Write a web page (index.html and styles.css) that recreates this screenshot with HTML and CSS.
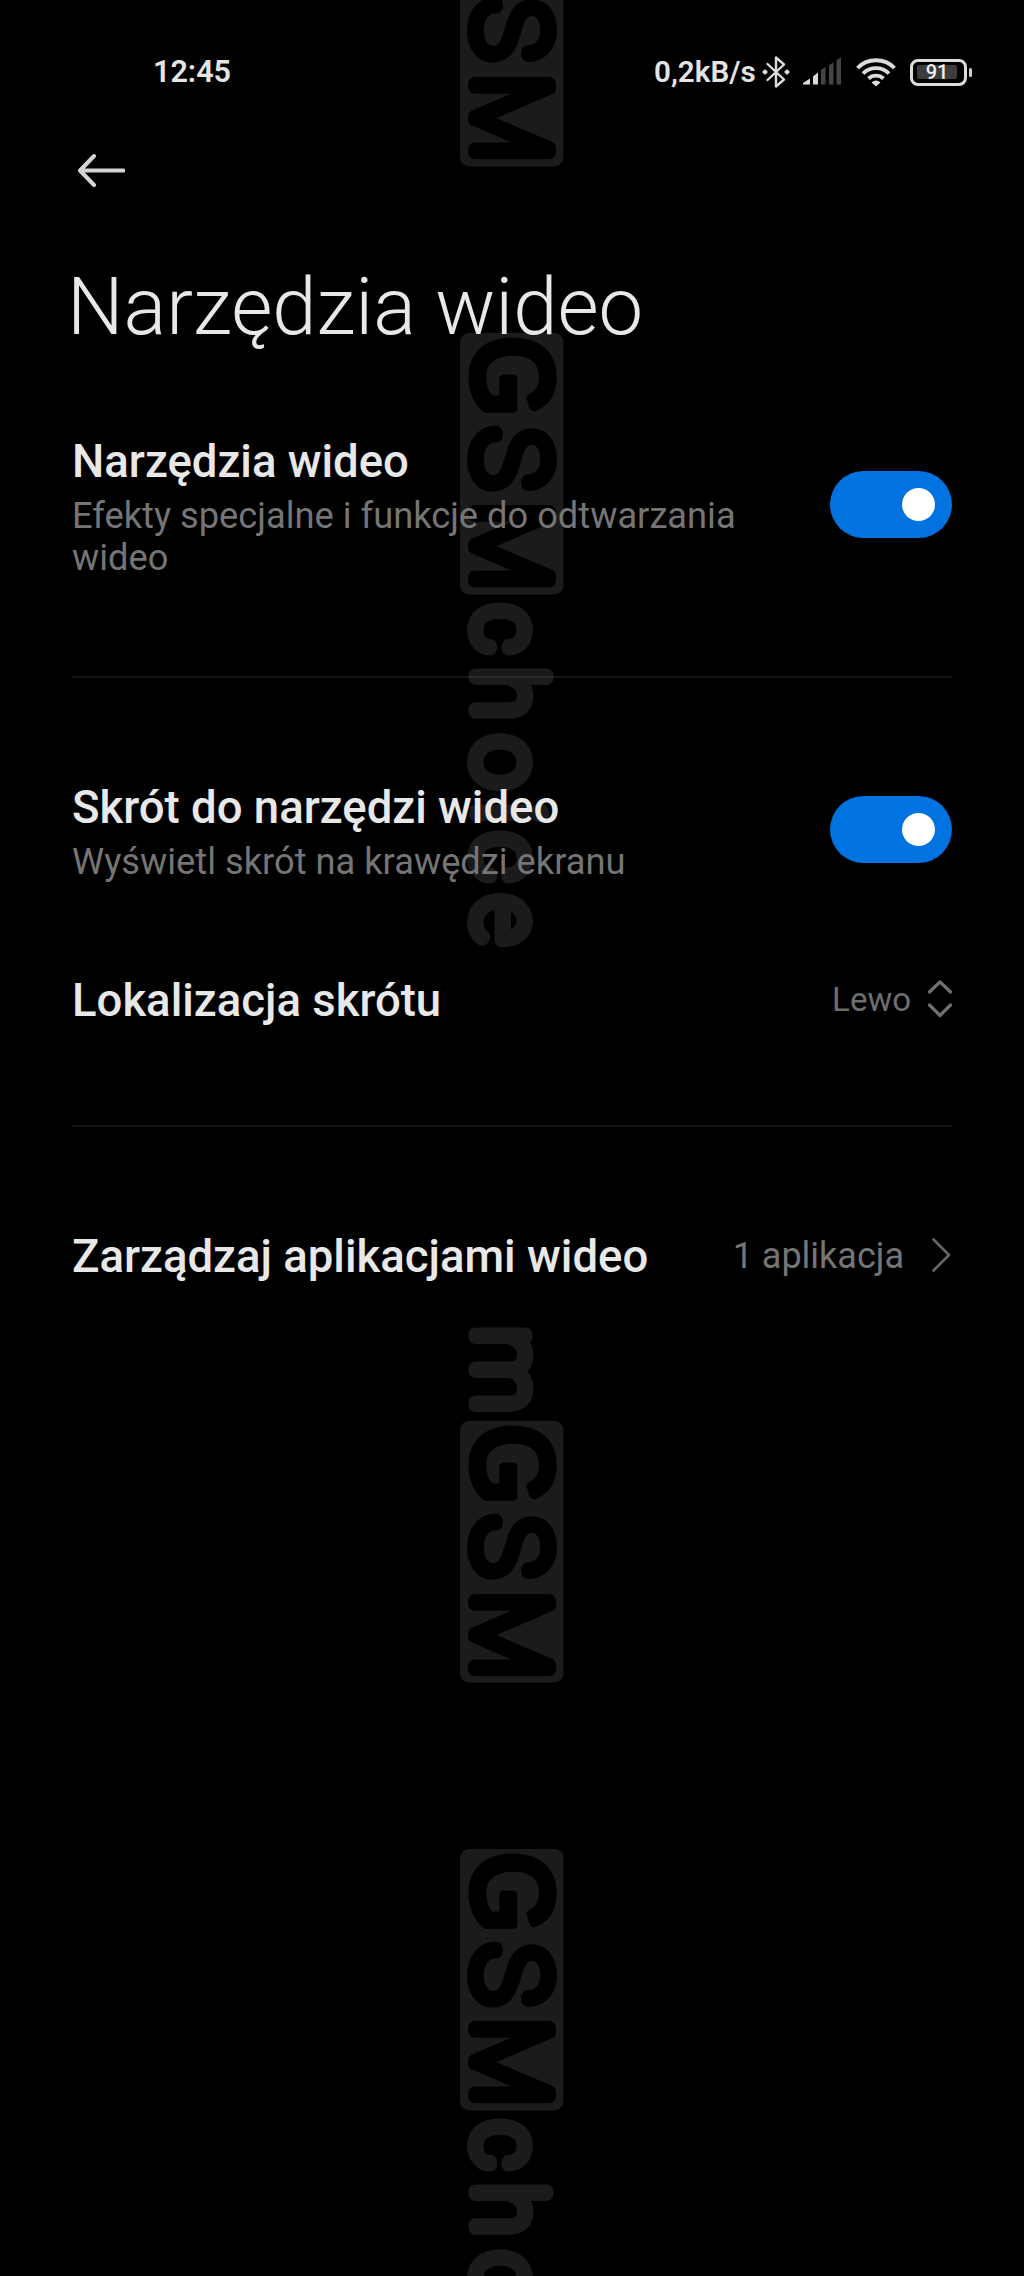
FILE: index.html
```html
<!DOCTYPE html>
<html lang="pl">
<head>
<meta charset="utf-8">
<title>Narzędzia wideo</title>
<link rel="stylesheet" href="styles.css">
</head>
<body>
<div class="screen">
  <svg class="watermark" width="1024" height="2276" viewBox="0 0 1024 2276" aria-hidden="true">
    <g transform="translate(475.5 0) rotate(90)">
      <rect class="tag" x="-95" y="-88" width="261.5" height="103.5" rx="9"/>
      <text class="caps" y="1" x="-1 74">SM</text>

      <rect class="tag" x="333" y="-88" width="261.5" height="103.5" rx="9"/>
      <text class="caps g" transform="translate(336.500 1.500) scale(.95 1.030)">G</text>
      <text class="caps" y="1" x="428 502">SM</text>
      <text class="lower" y="1" x="605 667.500 736 802 833 896">cho<tspan class="dotted">i</tspan>ce</text>

      <text class="lower" y="1" x="1327">m</text>
      <rect class="tag" x="1421" y="-88" width="261.5" height="103.5" rx="9"/>
      <text class="caps g" transform="translate(1424.500 1.500) scale(.95 1.030)">G</text>
      <text class="caps" y="1" x="1516 1591">SM</text>

      <rect class="tag" x="1849" y="-88" width="261.5" height="103.5" rx="9"/>
      <text class="caps g" transform="translate(1852.500 1.500) scale(.95 1.030)">G</text>
      <text class="caps" y="1" x="1944 2018">SM</text>
      <text class="lower" y="1" x="2121 2183.500 2252">cho</text>
    </g>
  </svg>

  <header class="status">
    <span class="clock">12:45</span>
    <div class="indicators">
      <span class="rate">0,2kB/s</span>
      <svg class="bluetooth" width="28" height="34" viewBox="0 0 28 34" fill="none" stroke="#dcdcdc" stroke-width="2.4" stroke-linecap="round" stroke-linejoin="round">
        <path d="M5.500 9 L22 24.500 L14 31.500 V2.500 L22 9.500 L5.500 25"/>
        <path stroke-width="1.500" fill="#dcdcdc" d="M1 17 L3 15 L5 17 L3 19 Z M23 17 L25 15 L27 17 L25 19 Z"/>
      </svg>
      <svg class="signal" width="40" height="30" viewBox="0 0 40 30">
        <path fill="#dcdcdc" d="M0 27.500 V26 L7 21.500 V27.500 Z M10 27.500 V19.500 L15 15.500 V27.500 Z"/>
        <path fill="#444" d="M18 27.500 V13 L22.500 10 V27.500 Z M26 27.500 V8.500 L30.500 5 V27.500 Z M33.500 27.500 V3 L38 0.500 V27.500 Z"/>
      </svg>
      <svg class="wifi" width="40" height="30" viewBox="0 0 40 30" fill="none" stroke="#dcdcdc" stroke-width="3.800">
        <path d="M1.500 11 A26 26 0 0 1 38.500 11"/>
        <path d="M7 16.500 A18.500 18.500 0 0 1 33 16.500"/>
        <path d="M12.500 21.500 A11 11 0 0 1 27.500 21.500"/>
        <path d="M15.500 25.500 Q20 21.500 24.500 25.500 L20.500 29 Q20 29.300 19.500 29 Z" fill="#dcdcdc" stroke="none"/>
      </svg>
      <div class="battery"><span class="charge">91</span></div>
    </div>
  </header>

  <nav class="toolbar">
    <svg width="48" height="36" viewBox="0 0 48 36" fill="none" stroke="#d4d4d4" stroke-width="4" stroke-linecap="round" stroke-linejoin="round">
      <path d="M46.500 18.500 H3.500 M17 4 L3 18.500 L17 33"/>
    </svg>
  </nav>

  <h1 class="page-title">Narzędzia wideo</h1>

  <main class="settings">
    <section class="group first">
      <div class="row tools">
        <div class="label">
          <h2>Narzędzia wideo</h2>
          <p>Efekty specjalne i funkcje do odtwarzania wideo</p>
        </div>
        <span class="toggle"><span class="knob"></span></span>
      </div>
    </section>
    <section class="group second">
      <div class="row shortcut">
        <div class="label">
          <h2>Skrót do narzędzi wideo</h2>
          <p>Wyświetl skrót na krawędzi ekranu</p>
        </div>
        <span class="toggle"><span class="knob"></span></span>
      </div>
      <div class="row location">
        <h2>Lokalizacja skrótu</h2>
        <div class="value small">
          <span>Lewo</span>
          <svg width="24" height="38" viewBox="0 0 24 38" fill="none" stroke="#707070" stroke-width="3.200" stroke-linecap="round" stroke-linejoin="round">
            <path d="M1.500 11 L12 0.800 L22.500 11 M1.500 24 L12 34.500 L22.500 24"/>
          </svg>
        </div>
      </div>
    </section>
    <section class="group third">
      <div class="row apps">
        <h2>Zarządzaj aplikacjami wideo</h2>
        <div class="value">
          <span>1 aplikacja</span>
          <svg width="20" height="36" viewBox="0 0 20 36" fill="none" stroke="#666" stroke-width="2.600" stroke-linecap="round" stroke-linejoin="round">
            <path d="M1.500 1.500 L17 17 L1.500 32.500"/>
          </svg>
        </div>
      </div>
    </section>
  </main>
</div>
</body>
</html>
```
FILE: styles.css
```css
* { box-sizing: border-box; }
body { margin: 0; background: #000; }
h1, h2, p { margin: 0; }
.screen {
  position: relative;
  width: 1024px;
  height: 2276px;
  overflow: hidden;
  background: #000;
  color: #e8e8e8;
  font-family: Roboto, "Liberation Sans", sans-serif;
}
.watermark { position: absolute; inset: 0; z-index: 0; }
.status, .toolbar, .page-title, .settings { position: relative; z-index: 1; }
.tag { fill: #1b1b1b; }
.caps, .lower { font-weight: 100; stroke-linejoin: round; stroke-width: 14px; }
.caps { font-size: 103px; fill: #000; stroke: #000; }
.lower { font-size: 95px; fill: #1b1b1b; stroke: #1b1b1b; }
.dotted { font-weight: 300; stroke-width: 11px; }
.g { font-family: "Liberation Sans", sans-serif; font-size: 108px; font-weight: 400; stroke-width: 9px; }

.status {
  display: flex;
  align-items: center;
  justify-content: space-between;
  height: 144px;
  padding: 0 50px 0 153px;
}
.clock, .rate { font-weight: 600; line-height: 36px; color: #e4e4e4; }
.clock { font-size: 30.5px; }
.rate { width: 100px; font-size: 29.6px; white-space: nowrap; }
.indicators { display: flex; align-items: center; }
.bluetooth { margin-left: 8px; }
.signal { margin-left: 13px; }
.wifi { margin-left: 13px; }
.battery {
  position: relative;
  width: 57px;
  height: 27px;
  margin: 0 7px 0 14px;
  padding: 3px 6px 3px 4px;
  border: 3.500px solid #dcdcdc;
  border-radius: 8px;
}
.battery::after {
  content: "";
  position: absolute;
  right: -8px;
  top: 6px;
  width: 3px;
  height: 9px;
  border-radius: 2px;
  background: #cfcfcf;
}
.charge {
  display: block;
  width: 40px;
  height: 14px;
  border-radius: 2px;
  background: #3c3c3c;
  color: #f0f0f0;
  font-size: 20px;
  font-weight: 500;
  line-height: 15px;
  text-align: center;
}
.toolbar { height: 116px; padding: 8px 77px; }
.toolbar svg { display: block; }
.page-title { height: 174px; padding-left: 67px; font-size: 79.6px; font-weight: 300; line-height: 94px; }

.settings { padding: 0 72px; }
.group + .group { border-top: 2px solid rgba(255, 255, 255, 0.08); }
.first { height: 242px; }
.second { height: 449px; padding-top: 102px; }
.third { padding-top: 102px; }
.row { display: flex; align-items: center; justify-content: space-between; }
.tools { height: 145px; align-items: flex-start; }
.shortcut { height: 102px; align-items: flex-start; }
.tools .toggle { margin-top: 37px; }
.shortcut .toggle { margin-top: 16px; }
h2 { padding-top: 2px; font-size: 45.5px; font-weight: 500; line-height: 54px; white-space: nowrap; }
.label { width: 720px; }
.label h2 { padding-top: 1px; }
.label p { margin-top: 6px; font-size: 36.25px; line-height: 42px; color: #757575; }
.toggle {
  display: flex;
  align-items: center;
  justify-content: flex-end;
  width: 122px;
  height: 67px;
  padding-right: 17px;
  border-radius: 34px;
  background: #0073e0;
}
.knob { width: 33px; height: 33px; border-radius: 50%; background: #fff; }
.location { height: 54px; margin-top: 91px; }
.apps { height: 54px; }
.value { display: flex; align-items: center; gap: 28px; color: #757575; font-size: 36px; line-height: 42px; }
.value svg { overflow: visible; }
.value.small { gap: 17px; font-size: 33px; color: #6e6e6e; }
```
